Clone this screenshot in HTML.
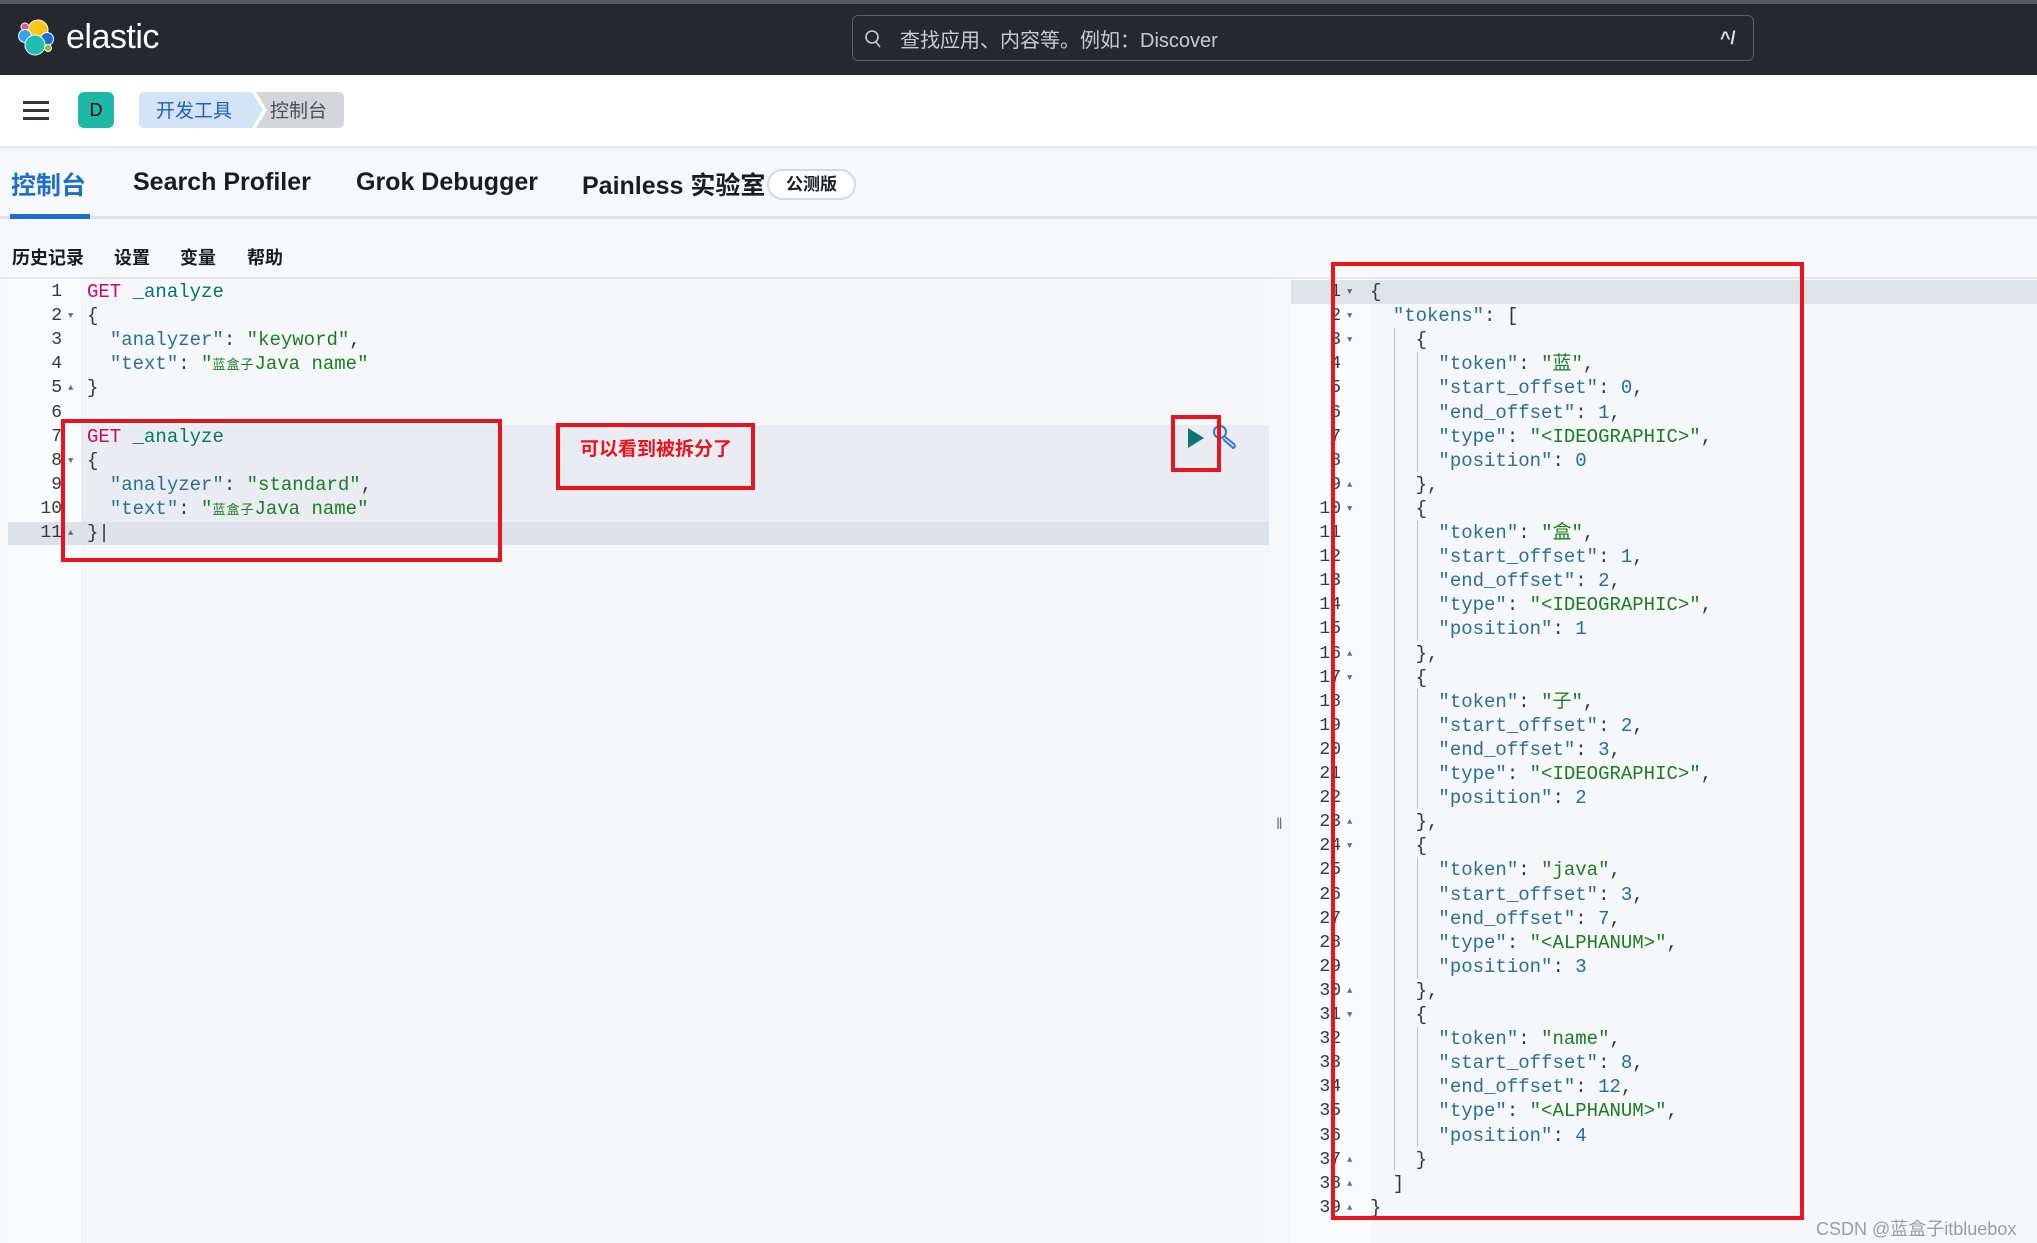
<!DOCTYPE html>
<html><head><meta charset="utf-8"><style>
*{margin:0;padding:0;box-sizing:border-box}
body{width:2037px;height:1243px;overflow:hidden;background:#f7f8fc;font-family:"Liberation Sans","Noto Sans CJK SC",sans-serif;position:relative}
.abs{position:absolute}
.hdr{left:0;top:0;width:2037px;height:75px;background:#25282f;border-top:4px solid #55585e}
.mono{font-family:"Liberation Mono","Noto Sans CJK SC",monospace;font-size:19px;white-space:pre}
.ln{position:absolute;left:0;width:100%;height:24.1px;line-height:24.1px}
.num{position:absolute;text-align:right;color:#343741;font-family:"Liberation Mono",monospace;font-size:18px}
.k{color:#2b6f97}.s{color:#1c7d20}.g{color:#c80a68}.t{color:#00756c}.n{color:#1a6fa4}.p{color:#343741}
.cj{display:inline-block;width:14px;font-size:13px;text-align:left;overflow:visible;white-space:nowrap}
.arrow{position:absolute;font-size:9px;color:#69707d}
.red{position:absolute;border:4px solid #e8141e}
</style></head><body>
<div class="abs hdr"></div>
<svg class="abs" style="left:17px;top:19px" width="40" height="38" viewBox="0 0 40 38">
<circle cx="21" cy="11" r="10" fill="#fec514" stroke="#fff" stroke-width="1"/>
<circle cx="8" cy="8" r="4" fill="#f04e98" stroke="#fff" stroke-width="1"/>
<circle cx="8" cy="17" r="6.5" fill="#36a2ef" stroke="#fff" stroke-width="1"/>
<circle cx="30" cy="20" r="6.5" fill="#1f6ed6" stroke="#fff" stroke-width="1"/>
<circle cx="18" cy="26" r="10" fill="#20bdb2" stroke="#fff" stroke-width="1"/>
<circle cx="31" cy="29" r="3.5" fill="#7dc42d" stroke="#fff" stroke-width="1"/>
</svg>
<div class="abs" style="left:66px;top:18px;color:#fff;font-size:34px;letter-spacing:-0.5px">elastic</div>
<div class="abs" style="left:852px;top:15px;width:902px;height:46px;border:1px solid #5a5e66;border-radius:6px;background:#25282f"></div>
<svg class="abs" style="left:864px;top:29px" width="18" height="20" viewBox="0 0 18 20"><circle cx="8" cy="8" r="6" fill="none" stroke="#c8cbd2" stroke-width="1.6"/><path d="M12 13l4 5" stroke="#c8cbd2" stroke-width="1.6"/></svg>
<div class="abs" style="left:900px;top:24px;color:#c8cbd2;font-size:20px">查找应用、内容等。例如：Discover</div>
<div class="abs" style="left:1720px;top:28px;color:#e0e2e6;font-size:18px;font-weight:bold">^/</div>

<div class="abs" style="left:0;top:75px;width:2037px;height:71px;background:#fff;box-shadow:0 2px 3px rgba(0,0,0,0.08)"></div>
<svg class="abs" style="left:23px;top:100px" width="26" height="20"><rect y="1" width="26" height="3" fill="#343741"/><rect y="9" width="26" height="3" fill="#343741"/><rect y="17" width="26" height="3" fill="#343741"/></svg>
<div class="abs" style="left:78px;top:92px;width:36px;height:36px;border-radius:6px;background:#1fb8a8;color:#000;font-size:18px;text-align:center;line-height:36px">D</div>
<svg class="abs" style="left:139px;top:92px" width="205" height="36"><path d="M6 0H113L124 18L113 36H6Q0 36 0 30V6Q0 0 6 0Z" fill="#d3e3f8"/><path d="M117 0H199Q205 0 205 6V30Q205 36 199 36H117L128 18Z" fill="#d3d5d9"/></svg>
<div class="abs" style="left:156px;top:96px;color:#1f61b8;font-size:19px">开发工具</div>
<div class="abs" style="left:270px;top:96px;color:#4a4d55;font-size:19px">控制台</div>

<div class="abs" style="left:0;top:216px;width:2037px;height:3px;background:#e0e4ec"></div>
<div class="abs" style="left:10px;top:214px;width:80px;height:5px;background:#1c6fcc"></div>
<div class="abs" style="left:11px;top:166px;color:#1c6fcc;font-size:25px;font-weight:bold">控制台</div>
<div class="abs" style="left:133px;top:168px;color:#1a1c21;font-size:25px;font-weight:bold">Search Profiler</div>
<div class="abs" style="left:356px;top:168px;color:#1a1c21;font-size:25px;font-weight:bold">Grok Debugger</div>
<div class="abs" style="left:582px;top:166px;color:#1a1c21;font-size:25px;font-weight:bold">Painless 实验室</div>
<div class="abs" style="left:767px;top:169px;width:89px;height:31px;border:2px solid #d3dae6;border-radius:16px;background:#fff;color:#1a1c21;font-size:17px;font-weight:bold;text-align:center;line-height:27px">公测版</div>

<div class="abs" style="left:12px;top:244px;color:#1a1c21;font-size:18px;font-weight:bold">历史记录</div>
<div class="abs" style="left:114px;top:244px;color:#1a1c21;font-size:18px;font-weight:bold">设置</div>
<div class="abs" style="left:180px;top:244px;color:#1a1c21;font-size:18px;font-weight:bold">变量</div>
<div class="abs" style="left:247px;top:244px;color:#1a1c21;font-size:18px;font-weight:bold">帮助</div>
<div class="abs" style="left:0;top:277px;width:2037px;height:2px;background:#e3e7ee"></div>

<div class="abs" style="left:8px;top:279px;width:1261px;height:964px;background:#f5f7fa"></div>
<div class="abs" style="left:8px;top:279px;width:73px;height:964px;background:#fafbfd"></div>
<div class="abs" style="left:81px;top:425px;width:1188px;height:97px;background:#e9ecf3"></div>
<div class="abs" style="left:8px;top:522px;width:1261px;height:23px;background:#dde2ea"></div>
<div class="abs mono" style="left:0;top:280px;width:1269px;height:300px">
<div class="ln" style="top:0"><span class="num" style="left:20px;width:42px">1</span><span style="position:absolute;left:87px"><span class="g">GET</span> <span class="t">_analyze</span></span></div>
<div class="ln" style="top:24.1px"><span class="num" style="left:20px;width:42px">2</span><span class="arrow" style="left:68px">▼</span><span style="position:absolute;left:87px" class="p">{</span></div>
<div class="ln" style="top:48.2px"><span class="num" style="left:20px;width:42px">3</span><span style="position:absolute;left:87px">  <span class="k">"analyzer"</span><span class="p">: </span><span class="s">"keyword"</span><span class="p">,</span></span></div>
<div class="ln" style="top:72.3px"><span class="num" style="left:20px;width:42px">4</span><span style="position:absolute;left:87px">  <span class="k">"text"</span><span class="p">: </span><span class="s">"<span class="cj">蓝</span><span class="cj">盒</span><span class="cj">子</span>Java name"</span></span></div>
<div class="ln" style="top:96.4px"><span class="num" style="left:20px;width:42px">5</span><span class="arrow" style="left:68px">▲</span><span style="position:absolute;left:87px" class="p">}</span></div>
<div class="ln" style="top:120.5px"><span class="num" style="left:20px;width:42px">6</span></div>
<div class="ln" style="top:144.6px"><span class="num" style="left:20px;width:42px">7</span><span style="position:absolute;left:87px"><span class="g">GET</span> <span class="t">_analyze</span></span></div>
<div class="ln" style="top:168.7px"><span class="num" style="left:20px;width:42px">8</span><span class="arrow" style="left:68px">▼</span><span style="position:absolute;left:87px" class="p">{</span></div>
<div class="ln" style="top:192.8px"><span class="num" style="left:20px;width:42px">9</span><span style="position:absolute;left:87px">  <span class="k">"analyzer"</span><span class="p">: </span><span class="s">"standard"</span><span class="p">,</span></span></div>
<div class="ln" style="top:216.9px"><span class="num" style="left:20px;width:42px">10</span><span style="position:absolute;left:87px">  <span class="k">"text"</span><span class="p">: </span><span class="s">"<span class="cj">蓝</span><span class="cj">盒</span><span class="cj">子</span>Java name"</span></span></div>
<div class="ln" style="top:241px"><span class="num" style="left:20px;width:42px">11</span><span class="arrow" style="left:68px">▲</span><span style="position:absolute;left:87px" class="p">}|</span></div>
</div>
<svg class="abs" style="left:1186px;top:427px" width="20" height="22"><path d="M2 1L18 11L2 21Z" fill="#0f766e"/></svg>
<svg class="abs" style="left:1211px;top:423px" width="28" height="28" viewBox="0 0 28 28"><circle cx="9" cy="9" r="6" fill="none" stroke="#3577d4" stroke-width="2"/><path d="M13 13L23 21Q25 24 22 25L12 16" fill="none" stroke="#3577d4" stroke-width="2"/></svg>
<div class="abs" style="left:1276px;top:816px;color:#69707d;font-size:16px">‖</div>

<div class="abs" style="left:1291px;top:279px;width:746px;height:964px;background:#f5f7fa"></div>
<div class="abs" style="left:1291px;top:279px;width:80px;height:964px;background:#fafbfd"></div>
<div class="abs" style="left:1291px;top:280px;width:746px;height:24px;background:#dfe3ea"></div>
<div class="abs" style="left:1394px;top:328px;width:1px;height:843px;background:#b9bec8"></div>
<div class="abs" style="left:1417px;top:352px;width:1px;height:120px;background:#b9bec8"></div>
<div class="abs" style="left:1417px;top:521px;width:1px;height:120px;background:#b9bec8"></div>
<div class="abs" style="left:1417px;top:689px;width:1px;height:120px;background:#b9bec8"></div>
<div class="abs" style="left:1417px;top:858px;width:1px;height:120px;background:#b9bec8"></div>
<div class="abs" style="left:1417px;top:1027px;width:1px;height:120px;background:#b9bec8"></div>
<div id="rp" class="abs mono" style="left:1289px;top:280px;width:746px;height:960px"></div>
<script>
var toks=[['蓝','0','1','&lt;IDEOGRAPHIC&gt;','0'],['盒','1','2','&lt;IDEOGRAPHIC&gt;','1'],['子','2','3','&lt;IDEOGRAPHIC&gt;','2'],['java','3','7','&lt;ALPHANUM&gt;','3'],['name','8','12','&lt;ALPHANUM&gt;','4']];
var out=[['{','d'],['  <span class=k>"tokens"</span>: [','d']];
toks.forEach(function(t,i){
out.push(['    {','d']);
out.push(['      <span class=k>"token"</span>: <span class=s>"'+t[0]+'"</span>,','']);
out.push(['      <span class=k>"start_offset"</span>: <span class=n>'+t[1]+'</span>,','']);
out.push(['      <span class=k>"end_offset"</span>: <span class=n>'+t[2]+'</span>,','']);
out.push(['      <span class=k>"type"</span>: <span class=s>"'+t[3]+'"</span>,','']);
out.push(['      <span class=k>"position"</span>: <span class=n>'+t[4]+'</span>','']);
out.push([i<4?'    },':'    }','u']);
});
out.push(['  ]','u']);out.push(['}','u']);
var h='';
out.forEach(function(o,i){
h+='<div class="ln p" style="top:'+(i*24.1)+'px"><span class="num" style="left:0;width:52px">'+(i+1)+'</span>'+(o[1]?'<span class="arrow" style="left:58px">'+(o[1]=='d'?'▼':'▲')+'</span>':'')+'<span style="position:absolute;left:81px">'+o[0]+'</span></div>';
});
document.getElementById('rp').innerHTML=h;
</script>

<div class="red" style="left:61px;top:419px;width:441px;height:143px"></div>
<div class="red" style="left:556px;top:423px;width:199px;height:67px"></div>
<div class="abs" style="left:580px;top:434px;color:#e8141e;font-size:19px;font-weight:bold">可以看到被拆分了</div>
<div class="red" style="left:1171px;top:415px;width:50px;height:57px"></div>
<div class="red" style="left:1331px;top:262px;width:473px;height:958px"></div>
<div class="abs" style="left:1816px;top:1215px;color:#9a9da3;font-size:18px">CSDN @蓝盒子itbluebox</div>
</body></html>
